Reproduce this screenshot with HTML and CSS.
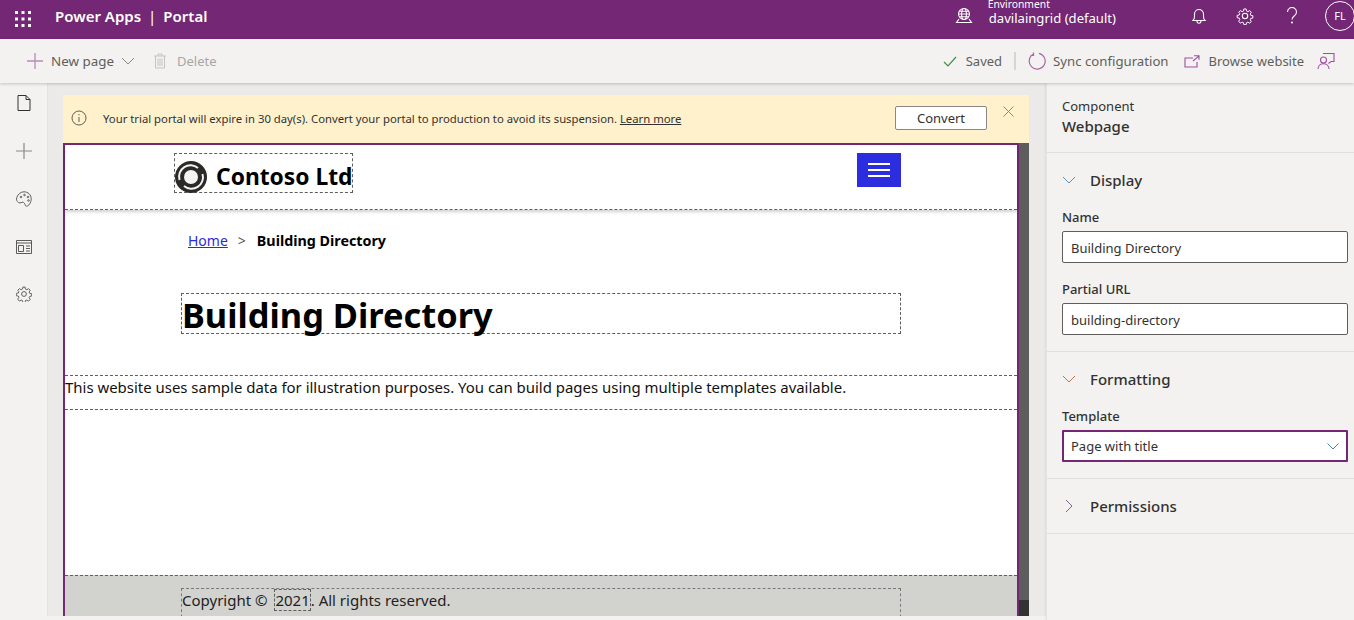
FILE: index.html
```html
<!DOCTYPE html>
<html lang="en">
<head>
  <meta charset="UTF-8" />
  <title>Power Apps Portal</title>
  <link rel="stylesheet" href="styles.css">
</head>
<body>
  <header class="topbar">
    <svg class="waffle" width="16" height="16" viewBox="0 0 16 16" fill="#fff">
      <rect x="0" y="0" width="3" height="3"/><rect x="6.5" y="0" width="3" height="3"/><rect x="13" y="0" width="3" height="3"/>
      <rect x="0" y="6.5" width="3" height="3"/><rect x="6.5" y="6.5" width="3" height="3"/><rect x="13" y="6.5" width="3" height="3"/>
      <rect x="0" y="13" width="3" height="3"/><rect x="6.5" y="13" width="3" height="3"/><rect x="13" y="13" width="3" height="3"/>
    </svg>
    <div class="brand">Power Apps<span class="brand-sep">|</span>Portal</div>
    <div class="env">
      <svg width="18" height="18" viewBox="0 0 18 18" fill="none" stroke="#fff" stroke-width="1.1">
        <circle cx="9" cy="7" r="5.5"/><ellipse cx="9" cy="7" rx="2.4" ry="5.5"/><path d="M3.5 7h11M4.3 4.3h9.4M4.3 9.8h9.4M4 12l-2.5 3.5h15L14 12"/>
      </svg>
      <div class="env-text">
        <div class="env-label">Environment</div>
        <div class="env-name">davilaingrid (default)</div>
      </div>
    </div>
    <div class="top-icons">
      <svg width="16" height="18" viewBox="0 0 16 18" fill="none" stroke="#fff" stroke-width="1.1"><path d="M2 13.5c1-1 1.5-2 1.5-4V7a4.5 4.5 0 0 1 9 0v2.5c0 2 .5 3 1.5 4zM6 14c0 3 4 3 4 0"/></svg>
      <svg class="top-gear" width="18" height="18" viewBox="0 0 18 18" fill="none" stroke="#fff" stroke-width="1.1"><circle cx="9" cy="9" r="2.7"/><path d="M7.7 1.2h2.6l.4 2.3 1.5.7 2-1.2 1.8 1.8-1.2 2 .6 1.5 2.3.4v2.6l-2.3.4-.6 1.5 1.2 2-1.8 1.8-2-1.2-1.5.6-.4 2.3H7.7l-.4-2.3-1.5-.6-2 1.2L2 14.8l1.2-2-.6-1.5-2.3-.4V8.3l2.3-.4.6-1.5L2 4.8 3.8 3l2 1.2 1.5-.7z" transform="translate(.9 .9) scale(.9)"/></svg>
      <svg class="help" width="12" height="18" viewBox="0 0 12 18" fill="none" stroke="#fff" stroke-width="1.1"><path d="M1.5 5a4.5 4.5 0 1 1 7 3.7C7 9.8 6 10.5 6 12.5"/><circle cx="6" cy="15.5" r=".5" fill="#fff"/></svg>
      <div class="avatar">FL</div>
    </div>
  </header>

  <nav class="commandbar">
    <div class="cmd new-page">
      <svg width="18" height="18" viewBox="0 0 18 18" stroke="#b98ab8" stroke-width="1.3"><path d="M9 1v16M1 9h16"/></svg>
      <span>New page</span>
      <svg class="cmd-caret" width="14" height="8" viewBox="0 0 14 8" fill="none" stroke="#8a8886"><path d="M1 1l6 6 6-6"/></svg>
    </div>
    <div class="cmd cmd-off">
      <svg width="14" height="16" viewBox="0 0 14 16" fill="none" stroke="#c4c3c1"><path d="M1 3h12M2.5 3v12h9V3M5 3V1h4v2M5 5.5V13M7 5.5V13M9 5.5V13"/></svg>
      <span>Delete</span>
    </div>
    <div class="cmd-right">
      <div class="cmd saved">
        <svg width="14" height="11" viewBox="0 0 14 11" fill="none" stroke="#3f9142" stroke-width="1.2"><path d="M1 6l4 4 8-9"/></svg>
        <span>Saved</span>
      </div>
      <div class="cmd-sep"></div>
      <div class="cmd sync">
        <svg width="18" height="18" viewBox="0 0 18 18" fill="none" stroke="#a965a9" stroke-width="1.2"><path d="M5.5 2A8 8 0 1 0 11 1.3M5.5 .5v3h-3"/></svg>
        <span>Sync configuration</span>
      </div>
      <div class="cmd browse">
        <svg width="16" height="13" viewBox="0 0 16 13" fill="none" stroke="#a04ea0" stroke-width="1.1"><path d="M9 3H1v9h12V7M10 .8h5v4M15 .8L9 6"/></svg>
        <span>Browse website</span>
      </div>
      <svg class="feedback" width="18" height="18" viewBox="0 0 18 18" fill="none" stroke="#a04ea0" stroke-width="1.1"><circle cx="6.5" cy="8" r="3"/><path d="M1 17c0-7 11-7 11 0M6 1.5h11v8h-3l-2.5 2"/></svg>
    </div>
  </nav>

  <div class="workspace">
    <aside class="rail">
      <svg width="14" height="16" viewBox="0 0 14 16" fill="none" stroke="#323130"><path d="M1 .5h8l4 4v11H1zM9 .5v4h4"/></svg>
      <svg width="16" height="16" viewBox="0 0 16 16" stroke="#8a8886" stroke-width="1.2"><path d="M8 0v16M0 8h16"/></svg>
      <svg width="16" height="16" viewBox="0 0 16 16" fill="none" stroke="#605e5c"><path d="M8 .8c4 0 7.2 3 7.2 7 0 4-2.6 7.4-4.7 7.4-1.8 0-1.2-3-3-3.8-2-.8-2.8 1.4-5 .2C.8 10 0 9 .8 6.5 1.8 3 5 .8 8 .8z"/><circle cx="5" cy="6" r=".8"/><circle cx="8.5" cy="4" r=".8"/><circle cx="12" cy="6" r=".8"/><circle cx="12.5" cy="9.5" r=".8"/></svg>
      <svg class="rail-layout" width="16" height="14" viewBox="0 0 16 14" fill="none" stroke="#4a4947" stroke-width=".9"><path d="M.5 .5h15v13H.5zM.5 3h15M2.5 5.5h5v6h-5zM10 6h4M10 8.5h4M10 11h4"/></svg>
      <svg width="16" height="16" viewBox="0 0 18 18" fill="none" stroke="#605e5c" stroke-width="1.1"><circle cx="9" cy="9" r="2.7"/><path d="M7.7 1.2h2.6l.4 2.3 1.5.7 2-1.2 1.8 1.8-1.2 2 .6 1.5 2.3.4v2.6l-2.3.4-.6 1.5 1.2 2-1.8 1.8-2-1.2-1.5.6-.4 2.3H7.7l-.4-2.3-1.5-.6-2 1.2L2 14.8l1.2-2-.6-1.5-2.3-.4V8.3l2.3-.4.6-1.5L2 4.8 3.8 3l2 1.2 1.5-.7z"/></svg>
    </aside>

    <main class="stage">
      <div class="notice">
        <svg width="16" height="16" viewBox="0 0 16 16" fill="none" stroke="#605e5c"><circle cx="8" cy="8" r="7"/><path d="M8 7v5M8 4v1.3"/></svg>
        <p class="notice-text">Your trial portal will expire in 30 day(s). Convert your portal to production to avoid its suspension. <a href="#">Learn more</a></p>
        <button class="convert">Convert</button>
        <svg class="notice-close" width="11" height="11" viewBox="0 0 11 11" stroke="#8a8886"><path d="M.5 .5l10 10M10.5 .5l-10 10"/></svg>
      </div>
      <div class="frame">
        <div class="preview">
          <div class="site-head">
            <div class="logo-box">
              <svg width="32" height="32" viewBox="0 0 32 32" fill="none">
                <circle cx="16" cy="16" r="16" fill="#2b2a29"/>
                <path d="M4.5 19A11.5 11.5 0 0 1 23 7" stroke="#f4f4f4" stroke-width="2"/>
                <path d="M27.5 13A11.5 11.5 0 0 1 9 25" stroke="#f4f4f4" stroke-width="2"/>
                <circle cx="16" cy="16" r="7" fill="#f4f4f4"/>
              </svg>
              <span>Contoso Ltd</span>
            </div>
            <div class="burger"><i></i><i></i><i></i></div>
          </div>
          <div class="crumbs"><a href="#">Home</a><span class="crumb-sep">&gt;</span><b>Building Directory</b></div>
          <h1 class="page-title">Building Directory</h1>
          <p class="sample">This website uses sample data for illustration purposes. You can build pages using multiple templates available.</p>
          <div class="spacer"></div>
          <footer class="site-foot">
            <div class="foot-box">Copyright © <span class="year">2021</span>. All rights reserved.</div>
          </footer>
        </div>
        <div class="scrollbar"><div class="thumb"></div></div>
      </div>
    </main>

    <aside class="panel">
      <div class="panel-head">
        <div class="panel-kicker">Component</div>
        <div class="panel-title">Webpage</div>
      </div>
      <section class="group group-display">
        <div class="group-head"><svg width="14" height="8" viewBox="0 0 14 8" fill="none" stroke="#5f8fb4"><path d="M1 1l6 6 6-6"/></svg><span>Display</span></div>
        <label>Name</label>
        <div class="field">Building Directory</div>
        <label>Partial URL</label>
        <div class="field">building-directory</div>
      </section>
      <section class="group group-format">
        <div class="group-head"><svg width="14" height="8" viewBox="0 0 14 8" fill="none" stroke="#b07a58"><path d="M1 1l6 6 6-6"/></svg><span>Formatting</span></div>
        <label>Template</label>
        <div class="field field-active">Page with title<svg width="12" height="7" viewBox="0 0 12 7" fill="none" stroke="#4a7fa8"><path d="M.5 .5L6 6l5.5-5.5"/></svg></div>
      </section>
      <section class="group group-perm">
        <div class="group-head"><svg class="chev-right" width="8" height="14" viewBox="0 0 8 14" fill="none" stroke="#7a6a85"><path d="M1 1l6 6-6 6"/></svg><span>Permissions</span></div>
      </section>
    </aside>
  </div>
</body>
</html>
```
FILE: styles.css
```css
* {
  box-sizing: border-box;
}

html, body {
  height: 100%;
}

body {
  margin: 0;
  overflow: hidden;
  font-family: "Noto Sans", sans-serif;
  font-size: 13px;
  color: #323130;
  background-color: #f3f2f1;
  display: flex;
  flex-direction: column;
}

/* top bar */
.topbar {
  height: 39px;
  flex: none;
  background-color: #742774;
  color: #fff;
  display: flex;
  align-items: center;
  padding-left: 15px;
}

.waffle {
  margin-top: -2px;
}

.brand {
  margin-left: 24px;
  margin-top: -7px;
  font-size: 15px;
  font-weight: 600;
}

.brand-sep {
  margin: 0 7px;
  font-weight: 400;
}

.env {
  margin-left: auto;
  display: flex;
  align-items: center;
  gap: 16px;
}

.env-text {
  margin-top: -7px;
}

.env-label {
  font-size: 10.3px;
  line-height: 11px;
  height: 5px;
  margin-top: -7px;
  margin-left: -1px;
}

.env-name {
  font-size: 13.1px;
  line-height: 18px;
  margin-top: 5px;
}

.env svg {
  margin-top: -8px;
}

.top-icons {
  display: flex;
  align-items: center;
  margin-left: 75px;
  margin-top: -8px;
  gap: 31px;
}

.top-gear {
  margin-left: -2px;
}

.help {
  margin-left: 1px;
}

.avatar {
  width: 30px;
  height: 30px;
  margin-left: -4px;
  margin-right: -1px;
  border: 1px solid #fff;
  border-radius: 50%;
  font-size: 11px;
  display: flex;
  align-items: center;
  justify-content: center;
}

/* command bar */
.commandbar {
  height: 44px;
  flex: none;
  display: flex;
  align-items: center;
  padding: 0 19px 0 26px;
  background-color: #f3f2f1;
  box-shadow: 0 1px 3px rgba(0, 0, 0, 0.2);
  position: relative;
  z-index: 2;
  color: #605e5c;
}

.cmd {
  display: flex;
  align-items: center;
}

.cmd span {
  margin-left: 7px;
}

.new-page span {
  font-size: 13.4px;
}

.cmd-caret {
  margin-left: 7px;
}

.cmd-off {
  margin-left: 18px;
  color: #a8a6a4;
}

.cmd-off span {
  margin-left: 10px;
}

.cmd-right {
  margin-left: auto;
  display: flex;
  align-items: center;
}

.saved span {
  margin-left: 9px;
}

.cmd-sep {
  width: 2px;
  height: 18px;
  background-color: #d6d5d3;
  margin: 0 12px;
}

.sync span {
  margin-left: 7px;
  font-size: 13.2px;
}

.browse {
  margin-left: 15px;
}

.browse span {
  margin-left: 9px;
}

.feedback {
  margin-left: 13px;
}

/* main area */
.workspace {
  flex: 1;
  min-height: 0;
  display: flex;
}

.rail {
  width: 47px;
  flex: none;
  background-color: #f3f2f1;
  display: flex;
  flex-direction: column;
  align-items: center;
  padding-top: 12px;
  gap: 32px;
}

.rail-layout {
  margin-top: 1px;
}

.stage {
  flex: 1;
  min-width: 0;
  background-color: #ebeae9;
  padding: 12px 17px 0 16px;
  display: flex;
  flex-direction: column;
  border-bottom: 4px solid #f3f2f1;
  box-shadow: inset 1px 0 #e4e3e2;
}

.notice {
  height: 48px;
  flex: none;
  background-color: #fff1cc;
  display: flex;
  align-items: center;
  padding: 0 15px 2px 8px;
  font-size: 11.3px;
}

.notice-text {
  margin: 0 0 0 16px;
  flex: 1;
  color: #323130;
}

.notice-text a {
  color: #323130;
}

.convert {
  width: 92px;
  height: 24px;
  margin-right: 16px;
  background-color: #fff;
  border: 1px solid #8a8886;
  border-radius: 2px;
  font-family: inherit;
  font-size: 13px;
  color: #323130;
  padding: 0;
}

.notice-close {
  align-self: flex-start;
  margin-top: 11px;
}

.frame {
  flex: 1;
  min-height: 0;
  display: flex;
}

.preview {
  flex: 1;
  min-width: 0;
  background-color: #fff;
  border: solid #742774;
  border-width: 2px 2px 0;
  display: flex;
  flex-direction: column;
  color: #000;
}

.scrollbar {
  width: 10px;
  flex: none;
  background-color: #5d5d5d;
  display: flex;
  flex-direction: column;
  justify-content: flex-end;
}

.thumb {
  height: 16px;
  background-color: #333;
}

.site-head {
  height: 65px;
  flex: none;
  border-bottom: 1px dashed #605e5c;
  box-shadow: 0 2px 3px rgba(0, 0, 0, 0.18);
  display: flex;
  align-items: flex-start;
  justify-content: space-between;
  padding: 8px 116px 0 109px;
}

.logo-box {
  width: 179px;
  height: 40px;
  border: 1px dashed #605e5c;
  display: flex;
  align-items: flex-end;
  font-size: 22.8px;
  font-weight: 700;
  line-height: 32px;
  white-space: nowrap;
  color: #000;
}

.logo-box svg {
  flex: none;
  margin-bottom: -1px;
}

.logo-box span {
  margin-left: 9px;
  margin-bottom: -1px;
}

.burger {
  width: 44px;
  height: 34px;
  background-color: #2d2de0;
  display: flex;
  flex-direction: column;
  align-items: center;
  justify-content: center;
  gap: 4px;
}

.burger i {
  display: block;
  width: 22px;
  height: 2px;
  background-color: #fff;
}

.crumbs {
  margin: 21px 0 0 123px;
  font-size: 14px;
  line-height: 20px;
}

.crumbs a {
  color: #2a2ae0;
}

.crumbs b {
  font-size: 14.3px;
}

.crumb-sep {
  margin: 0 11px 0 10px;
  color: #555;
}

.page-title {
  width: 720px;
  height: 41px;
  margin: 42px 0 0 116px;
  border: 1px dashed #605e5c;
  font-size: 34.4px;
  line-height: 42px;
  font-weight: 700;
  white-space: nowrap;
}

.sample {
  margin: 41px 0 0;
  height: 35px;
  border: dashed #605e5c;
  border-width: 1px 0;
  font-size: 14.94px;
  line-height: 22px;
  color: #111;
  white-space: nowrap;
}

.spacer {
  flex: 1;
}

.site-foot {
  height: 41px;
  flex: none;
  background-color: #d2d3cf;
  border-top: 1px dashed #605e5c;
  padding: 12px 0 0 116px;
  overflow: hidden;
}

.foot-box {
  width: 720px;
  height: 40px;
  border: 1px dashed #fff;
  outline: 1px dashed #777;
  outline-offset: -1px;
  font-size: 15px;
  line-height: 22px;
  color: #222;
  white-space: nowrap;
}

.year {
  border: 1px dashed #605e5c;
  display: inline-block;
  line-height: 20px;
  margin-left: 3px;
}

/* right panel */
.panel {
  width: 308px;
  flex: none;
  background-color: #f3f2f1;
  border-left: 1px solid #e4e3e2;
  box-shadow: -1px 0 2px rgba(0, 0, 0, 0.06);
}

.panel-head {
  height: 70px;
  padding: 14px 15px 0;
  border-bottom: 1px solid #e1dfdd;
}

.panel-kicker {
  font-size: 13px;
  line-height: 18px;
}

.panel-title {
  font-size: 15px;
  font-weight: 500;
  line-height: 22px;
}

.group {
  border-bottom: 1px solid #e1dfdd;
  padding: 0 6px 0 15px;
}

.group-display {
  height: 199px;
}

.group-format {
  height: 127px;
}

.group-perm {
  height: 55px;
}

.group-head {
  height: 56px;
  padding-bottom: 2px;
  display: flex;
  align-items: center;
  font-size: 15px;
  font-weight: 500;
  color: #323130;
}

.group-head span {
  margin-left: 14px;
}

.chev-right {
  margin-left: 3px;
  margin-right: 3px;
}

.group label {
  display: block;
  font-size: 13px;
  font-weight: 500;
  line-height: 18px;
  margin-bottom: 5px;
}

.group-head + label {
  margin-top: -1px;
}

.field {
  height: 32px;
  margin-bottom: 17px;
  padding: 0 8px;
  background-color: #fff;
  border: 1px solid #605e5c;
  border-radius: 2px;
  font-size: 13px;
  line-height: 32px;
  color: #323130;
}

.field-active {
  border: 2px solid #742774;
  line-height: 28px;
  display: flex;
  align-items: center;
  justify-content: space-between;
  padding-left: 7px;
  padding-right: 7px;
  border-radius: 1px;
}
```
